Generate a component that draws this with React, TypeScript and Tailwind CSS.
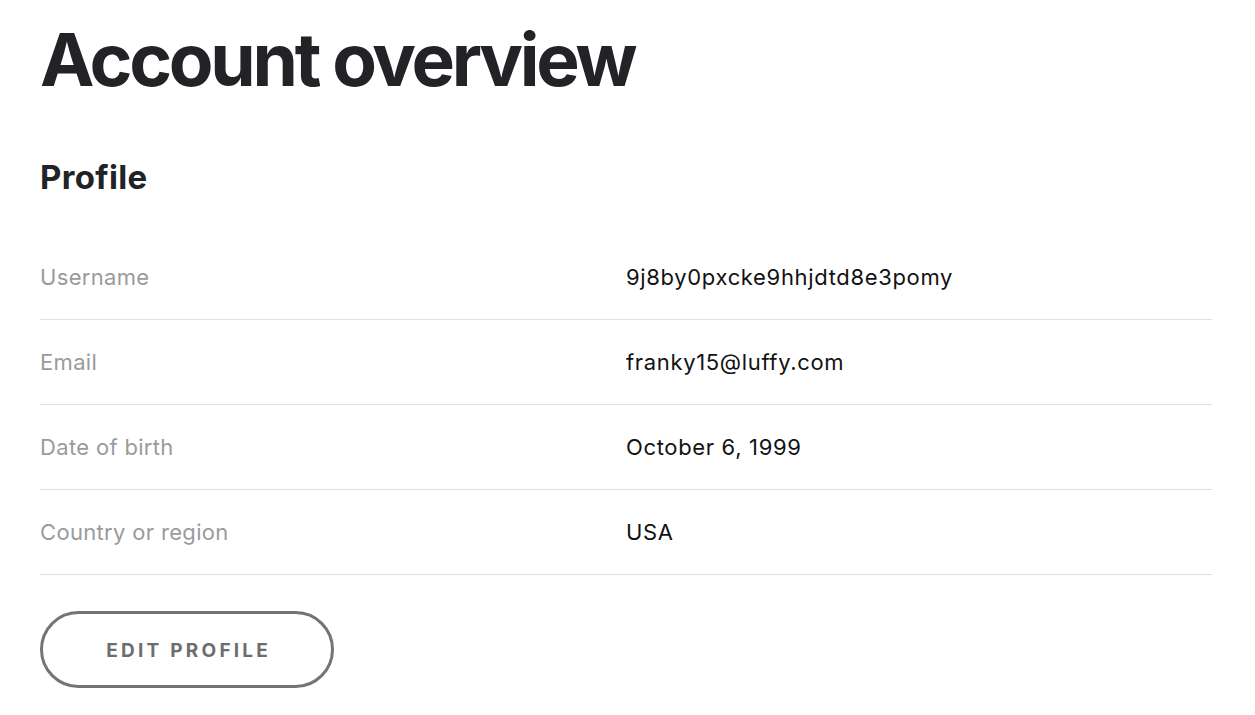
const profile = [
  { label: "Username", value: "9j8by0pxcke9hhjdtd8e3pomy" },
  { label: "Email", value: "franky15@luffy.com" },
  { label: "Date of birth", value: "October 6, 1999" },
  { label: "Country or region", value: "USA" },
];

export default function App() {
  return (
    <main
      className="min-h-screen bg-white pl-10 pr-[43px] pt-[23px]"
      style={{ fontFamily: "Inter, 'Noto Sans', sans-serif" }}
    >
      <h1 className="text-[73px] font-bold leading-none tracking-[-0.045em] text-[#222326]">
        Account overview
      </h1>

      <h2 className="mt-[65px] text-[33px] font-bold leading-none tracking-[0.01em] text-[#222326]">
        Profile
      </h2>

      <dl className="mt-[41px]">
        {profile.map((row) => (
          <div
            key={row.label}
            className="grid h-[85px] grid-cols-2 items-center border-b border-[#dfdfdf]"
          >
            <dt className="text-[22px] tracking-[0.015em] text-[#999b9d]">{row.label}</dt>
            <dd className="text-[22px] tracking-[0.03em] text-[#121212]">{row.value}</dd>
          </div>
        ))}
      </dl>

      <button
        type="button"
        className="mt-[36px] flex h-[77px] w-[294px] items-center justify-center rounded-full border-[3px] border-[#747474] pl-[0.18em] pt-[3px] text-[19px] font-bold tracking-[0.17em] text-[#6b6e70]"
      >
        EDIT PROFILE
      </button>
    </main>
  );
}
